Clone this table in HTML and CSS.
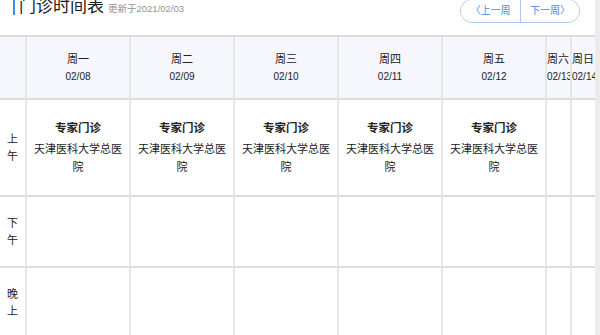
FILE: index.html
```html
<!DOCTYPE html>
<html lang="zh-CN">
<head>
<meta charset="utf-8">
<title>门诊时间表</title>
<link rel="stylesheet" href="styles.css">
</head>
<body>
<div class="page">
  <div class="main">
    <header class="topbar">
      <div class="title-wrap">
        <span class="bar"></span>
        <div class="title-text">
          <h1 class="title">门诊时间表</h1>
          <span class="updated">更新于2021/02/03</span>
        </div>
      </div>
      <div class="pager">
        <button class="pager-btn prev">〈上一周</button>
        <button class="pager-btn next">下一周〉</button>
      </div>
    </header>

    <div class="grid">
      <div class="cell head corner"></div>
      <div class="cell head day"><span>周一</span><span class="date">02/08</span></div>
      <div class="cell head day"><span>周二</span><span class="date">02/09</span></div>
      <div class="cell head day"><span>周三</span><span class="date">02/10</span></div>
      <div class="cell head day"><span>周四</span><span class="date">02/11</span></div>
      <div class="cell head day"><span>周五</span><span class="date">02/12</span></div>
      <div class="cell head day narrow"><span>周六</span><span class="date">02/13</span></div>
      <div class="cell head day narrow"><span>周日</span><span class="date">02/14</span></div>

      <div class="cell label"><span>上</span><span>午</span></div>
      <div class="cell slot"><div class="slot-type">专家门诊</div><div class="slot-place">天津医科大学总医院</div></div>
      <div class="cell slot"><div class="slot-type">专家门诊</div><div class="slot-place">天津医科大学总医院</div></div>
      <div class="cell slot"><div class="slot-type">专家门诊</div><div class="slot-place">天津医科大学总医院</div></div>
      <div class="cell slot"><div class="slot-type">专家门诊</div><div class="slot-place">天津医科大学总医院</div></div>
      <div class="cell slot"><div class="slot-type">专家门诊</div><div class="slot-place">天津医科大学总医院</div></div>
      <div class="cell slot"></div>
      <div class="cell slot"></div>

      <div class="cell label"><span>下</span><span>午</span></div>
      <div class="cell slot"></div>
      <div class="cell slot"></div>
      <div class="cell slot"></div>
      <div class="cell slot"></div>
      <div class="cell slot"></div>
      <div class="cell slot"></div>
      <div class="cell slot"></div>

      <div class="cell label"><span>晚</span><span>上</span></div>
      <div class="cell slot"></div>
      <div class="cell slot"></div>
      <div class="cell slot"></div>
      <div class="cell slot"></div>
      <div class="cell slot"></div>
      <div class="cell slot"></div>
      <div class="cell slot"></div>
    </div>
  </div>
  <div class="scrollbar"></div>
</div>
</body>
</html>
```

FILE: styles.css
```css
html, body {
  margin: 0;
  padding: 0;
  background: #ffffff;
  overflow: hidden;
}

body {
  font-family: "Liberation Sans", "Noto Sans CJK SC", sans-serif;
  color: #222222;
}

.page {
  display: flex;
  height: 335px;
  overflow: hidden;
}

.main {
  width: 595px;
  flex: none;
}

.scrollbar {
  width: 5px;
  flex: none;
  background: #ececec;
}

/* top bar */
.topbar {
  height: 35px;
  display: flex;
  justify-content: space-between;
  align-items: flex-start;
  padding: 0 15px 0 13px;
  box-sizing: border-box;
}

.title-wrap {
  display: flex;
  align-items: center;
  margin-top: -3px;
}

.bar {
  width: 2px;
  height: 16px;
  background: #3b8cf5;
  margin-right: 4px;
}

.title-text {
  display: flex;
  align-items: baseline;
}

.title {
  margin: 0;
  font-size: 17px;
  line-height: 20px;
  font-weight: normal;
  color: #1a1a1a;
}

.updated {
  margin-left: 4px;
  font-size: 9.5px;
  color: #929292;
}

.pager {
  display: flex;
  margin-top: -1px;
  height: 24px;
  border: 1px solid #a9c8f3;
  border-radius: 13px;
  box-sizing: border-box;
  overflow: hidden;
}

.pager-btn {
  width: 59px;
  border: none;
  background: #ffffff;
  color: #3f8aee;
  font-family: "Liberation Sans", "Noto Sans CJK SC", sans-serif;
  font-size: 10px;
  padding: 0;
  line-height: 22px;
}

.pager-btn.next {
  border-left: 1px solid #a9c8f3;
}

/* schedule grid */
.grid {
  display: grid;
  grid-template-columns: 25px repeat(5, 104px) 25px 25px;
  grid-template-rows: 63px 97px 71px 71px;
  border-top: 2px solid #dcdcdc;
}

.cell {
  box-sizing: border-box;
  border-bottom: 2px solid #dcdcdc;
  border-left: 2px solid #e6e6e6;
  font-size: 11px;
  color: #222222;
}

.cell.corner,
.cell.label {
  border-left: none;
}

.head {
  background: #f5f7fc;
}

.day {
  display: flex;
  flex-direction: column;
  justify-content: center;
  align-items: center;
  line-height: 17px;
  padding-top: 1px;
  white-space: nowrap;
}

.day.narrow {
  align-items: flex-start;
  text-align: left;
}

.day .date {
  font-size: 10px;
}

.label {
  display: flex;
  flex-direction: column;
  justify-content: center;
  align-items: center;
  line-height: 17px;
}

.slot {
  display: flex;
  flex-direction: column;
  justify-content: center;
  text-align: center;
  padding: 0 6px;
}

.slot-type {
  font-weight: bold;
  font-size: 11.5px;
  line-height: 18px;
  margin-bottom: 3px;
}

.slot-place {
  line-height: 18px;
}
```
